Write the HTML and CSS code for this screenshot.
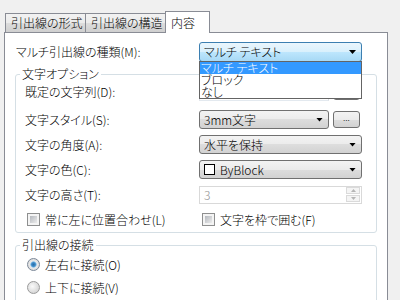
FILE: index.html
```html
<!DOCTYPE html>
<html lang="ja">
<head>
  <meta charset="UTF-8">
  <title>マルチ引出線スタイル - 内容</title>
  <link rel="stylesheet" href="styles.css">
</head>
<body>
  <div class="dialog">
    <div class="tabs">
      <div class="tab">引出線の形式</div>
      <div class="tab">引出線の構造</div>
      <div class="tab active">内容</div>
    </div>
    <div class="page">
      <div class="type-row">
        <span class="lbl">マルチ引出線の種類(M):</span>
        <div class="combo open wide">
          <span class="combo-text">マルチ テキスト</span>
          <span class="arrow"></span>
          <ul class="droplist">
            <li class="selected">マルチ テキスト</li>
            <li>ブロック</li>
            <li>なし</li>
          </ul>
        </div>
      </div>

      <fieldset class="group">
        <legend>文字オプション</legend>
        <div class="field-row first">
          <span class="lbl">既定の文字列(D):</span>
          <div class="textbox short"></div>
          <div class="btn-dots">...</div>
        </div>
        <div class="field-row">
          <span class="lbl">文字スタイル(S):</span>
          <div class="combo short">
            <span class="combo-text">3mm文字</span>
            <span class="arrow"></span>
          </div>
          <div class="btn-dots">...</div>
        </div>
        <div class="field-row">
          <span class="lbl">文字の角度(A):</span>
          <div class="combo wide">
            <span class="combo-text">水平を保持</span>
            <span class="arrow"></span>
          </div>
        </div>
        <div class="field-row">
          <span class="lbl">文字の色(C):</span>
          <div class="combo wide">
            <span class="combo-text"><span class="swatch"></span>ByBlock</span>
            <span class="arrow"></span>
          </div>
        </div>
        <div class="field-row">
          <span class="lbl">文字の高さ(T):</span>
          <div class="spinbox disabled">
            <span class="spin-value">3</span>
            <span class="spin-buttons">
              <span class="spin-up"></span>
              <span class="spin-down"></span>
            </span>
          </div>
        </div>
        <div class="field-row checks">
          <label class="check-item first-col"><span class="check"></span>常に左に位置合わせ(L)</label>
          <label class="check-item"><span class="check"></span>文字を枠で囲む(F)</label>
        </div>
      </fieldset>

      <fieldset class="group connect">
        <legend>引出線の接続</legend>
        <label class="radio-item"><span class="radio on"></span>左右に接続(O)</label>
        <label class="radio-item"><span class="radio"></span>上下に接続(V)</label>
      </fieldset>
    </div>
  </div>
</body>
</html>
```

FILE: styles.css
```css
body {
  margin: 0;
  background: #f0f0f0;
  font-family: "Noto Sans CJK JP", "Liberation Sans", sans-serif;
  font-size: 12px;
  font-weight: 300;
  line-height: 14px;
  color: #000;
  font-feature-settings: "palt";
}
.dialog {
  padding: 11px 0 0 4px;
  width: 384px;
}

/* タブ */
.tabs {
  display: flex;
  align-items: flex-end;
  height: 21px;
  padding-left: 1px;
}
.tab {
  box-sizing: border-box;
  height: 19px;
  width: 81px;
  padding-left: 5px;
  line-height: 18px;
  border: 1px solid #898c95;
  border-bottom: none;
  background: linear-gradient(#f2f2f2 0%, #ebebeb 50%, #dddddd 50%, #cfcfcf 100%);
  white-space: nowrap;
}
.tab + .tab {
  margin-left: -1px;
}
.tab.active {
  position: relative;
  z-index: 1;
  height: 22px;
  width: 45px;
  margin-bottom: -1px;
  padding: 2px 0 0 5px;
  line-height: 18px;
  background: #fff;
}

/* ページ */
.page {
  box-sizing: border-box;
  width: 384px;
  height: 280px;
  padding-top: 9px;
  border: 1px solid #898c95;
  background: #fff;
}
.type-row {
  display: flex;
  align-items: center;
  height: 20px;
  padding-left: 11px;
}
.type-row .lbl {
  width: 183px;
}

/* グループ */
.group {
  margin: 5px 10px 0;
  padding: 1px 13px 3px 9px;
  border: 1px solid #d5dfe5;
  border-radius: 3px;
}
.group legend {
  margin-left: -5px;
  padding: 0 2px;
  line-height: 14px;
}
.group.connect {
  margin-top: 5px;
  padding-top: 3px;
  height: 60px;
}
.field-row {
  display: flex;
  align-items: center;
  height: 19px;
}
.field-row + .field-row {
  margin-top: 6px;
}
.field-row.first + .field-row {
  margin-top: 9px;
}
.field-row .lbl {
  width: 174px;
}

/* コンボボックス */
.combo {
  position: relative;
  box-sizing: border-box;
  display: flex;
  align-items: center;
  justify-content: space-between;
  height: 19px;
  padding: 0 5px 0 4px;
  border: 1px solid #707070;
  border-radius: 3px;
  background: linear-gradient(#f3f3f3 0%, #ebebeb 50%, #dddddd 50%, #d2d2d2 100%);
}
.combo.wide {
  width: 163px;
}
.combo.short {
  width: 130px;
}
.combo.open {
  height: 20px;
  border-color: #3c7fb1;
  background: linear-gradient(#eaf6fd 0%, #d9f0fc 50%, #bee6fd 50%, #a7d9f5 100%);
}
.combo-text {
  display: flex;
  align-items: center;
  white-space: nowrap;
}
.arrow {
  width: 7px;
  height: 4px;
  background: #000;
  clip-path: polygon(0 0, 100% 0, 50% 100%);
}
.swatch {
  box-sizing: border-box;
  width: 11px;
  height: 11px;
  margin-right: 5px;
  border: 1px solid #000;
  background: #fff;
}

/* ドロップダウン一覧 */
.droplist {
  position: absolute;
  top: 100%;
  left: -1px;
  z-index: 2;
  box-sizing: border-box;
  width: 163px;
  height: 38px;
  margin: 0;
  padding: 0;
  list-style: none;
  border: 1px solid #646464;
  background: #fff;
}
.droplist li {
  height: 12px;
  padding-left: 1px;
  line-height: 12px;
  white-space: nowrap;
}
.droplist li.selected {
  background: #3399ff;
  color: #fff;
}

/* テキストボックス・ボタン */
.textbox {
  box-sizing: border-box;
  height: 19px;
  border: 1px solid #abadb3;
  border-color: #abadb3 #dbdfe6 #e3e9ef #e2e3ea;
  background: #fff;
}
.textbox.short {
  width: 130px;
}
.btn-dots {
  box-sizing: border-box;
  width: 27px;
  height: 17px;
  margin-left: 4px;
  border: 1px solid #707070;
  border-radius: 3px;
  background: linear-gradient(#f3f3f3 0%, #ebebeb 50%, #dddddd 50%, #d2d2d2 100%);
  font-size: 9px;
  line-height: 11px;
  text-align: center;
}

/* スピンボックス */
.spinbox {
  box-sizing: border-box;
  display: flex;
  align-items: center;
  justify-content: space-between;
  width: 163px;
  height: 18px;
  padding: 0 1px 0 4px;
  border: 1px solid #d9d9d9;
  background: #fff;
}
.spinbox.disabled .spin-value {
  color: #8d8d8d;
}
.spin-buttons {
  display: flex;
  flex-direction: column;
  width: 14px;
}
.spin-up,
.spin-down {
  position: relative;
  box-sizing: border-box;
  height: 7px;
  border: 1px solid #dadada;
  background: #f4f4f4;
}
.spin-down {
  margin-top: 1px;
}
.spin-up::after,
.spin-down::after {
  content: "";
  position: absolute;
  left: 4px;
  top: 1px;
  width: 5px;
  height: 3px;
  background: #b5b5b5;
}
.spin-up::after {
  clip-path: polygon(50% 0, 100% 100%, 0 100%);
}
.spin-down::after {
  clip-path: polygon(0 0, 100% 0, 50% 100%);
}

/* チェックボックス・ラジオ */
.checks {
  padding-left: 2px;
}
.check-item,
.radio-item {
  display: flex;
  align-items: center;
  white-space: nowrap;
}
.check-item.first-col {
  width: 175px;
}
.check {
  box-sizing: border-box;
  width: 13px;
  height: 13px;
  margin-right: 5px;
  padding: 2px;
  border: 1px solid #8e8f8f;
  background: #f4f4f4;
}
.check::before {
  content: "";
  display: block;
  width: 7px;
  height: 7px;
  background: linear-gradient(135deg, #b4b8be, #ececec);
}
.radio-item {
  height: 19px;
  padding-left: 2px;
}
.radio-item + .radio-item {
  margin-top: 4px;
}
.radio {
  box-sizing: border-box;
  width: 13px;
  height: 13px;
  margin-right: 5px;
  border: 1px solid #9a9a9a;
  border-radius: 50%;
  background: radial-gradient(circle at 40% 40%, #fafafa 0, #d8d8d8 70%, #c4c4c4 100%);
}
.radio.on {
  border-color: #7b8797;
  background: radial-gradient(circle, #2d6ea8 0, #3c8bc8 25%, #9cc8ea 38%, #e9e9e9 45%, #d4d4d4 100%);
}
```
